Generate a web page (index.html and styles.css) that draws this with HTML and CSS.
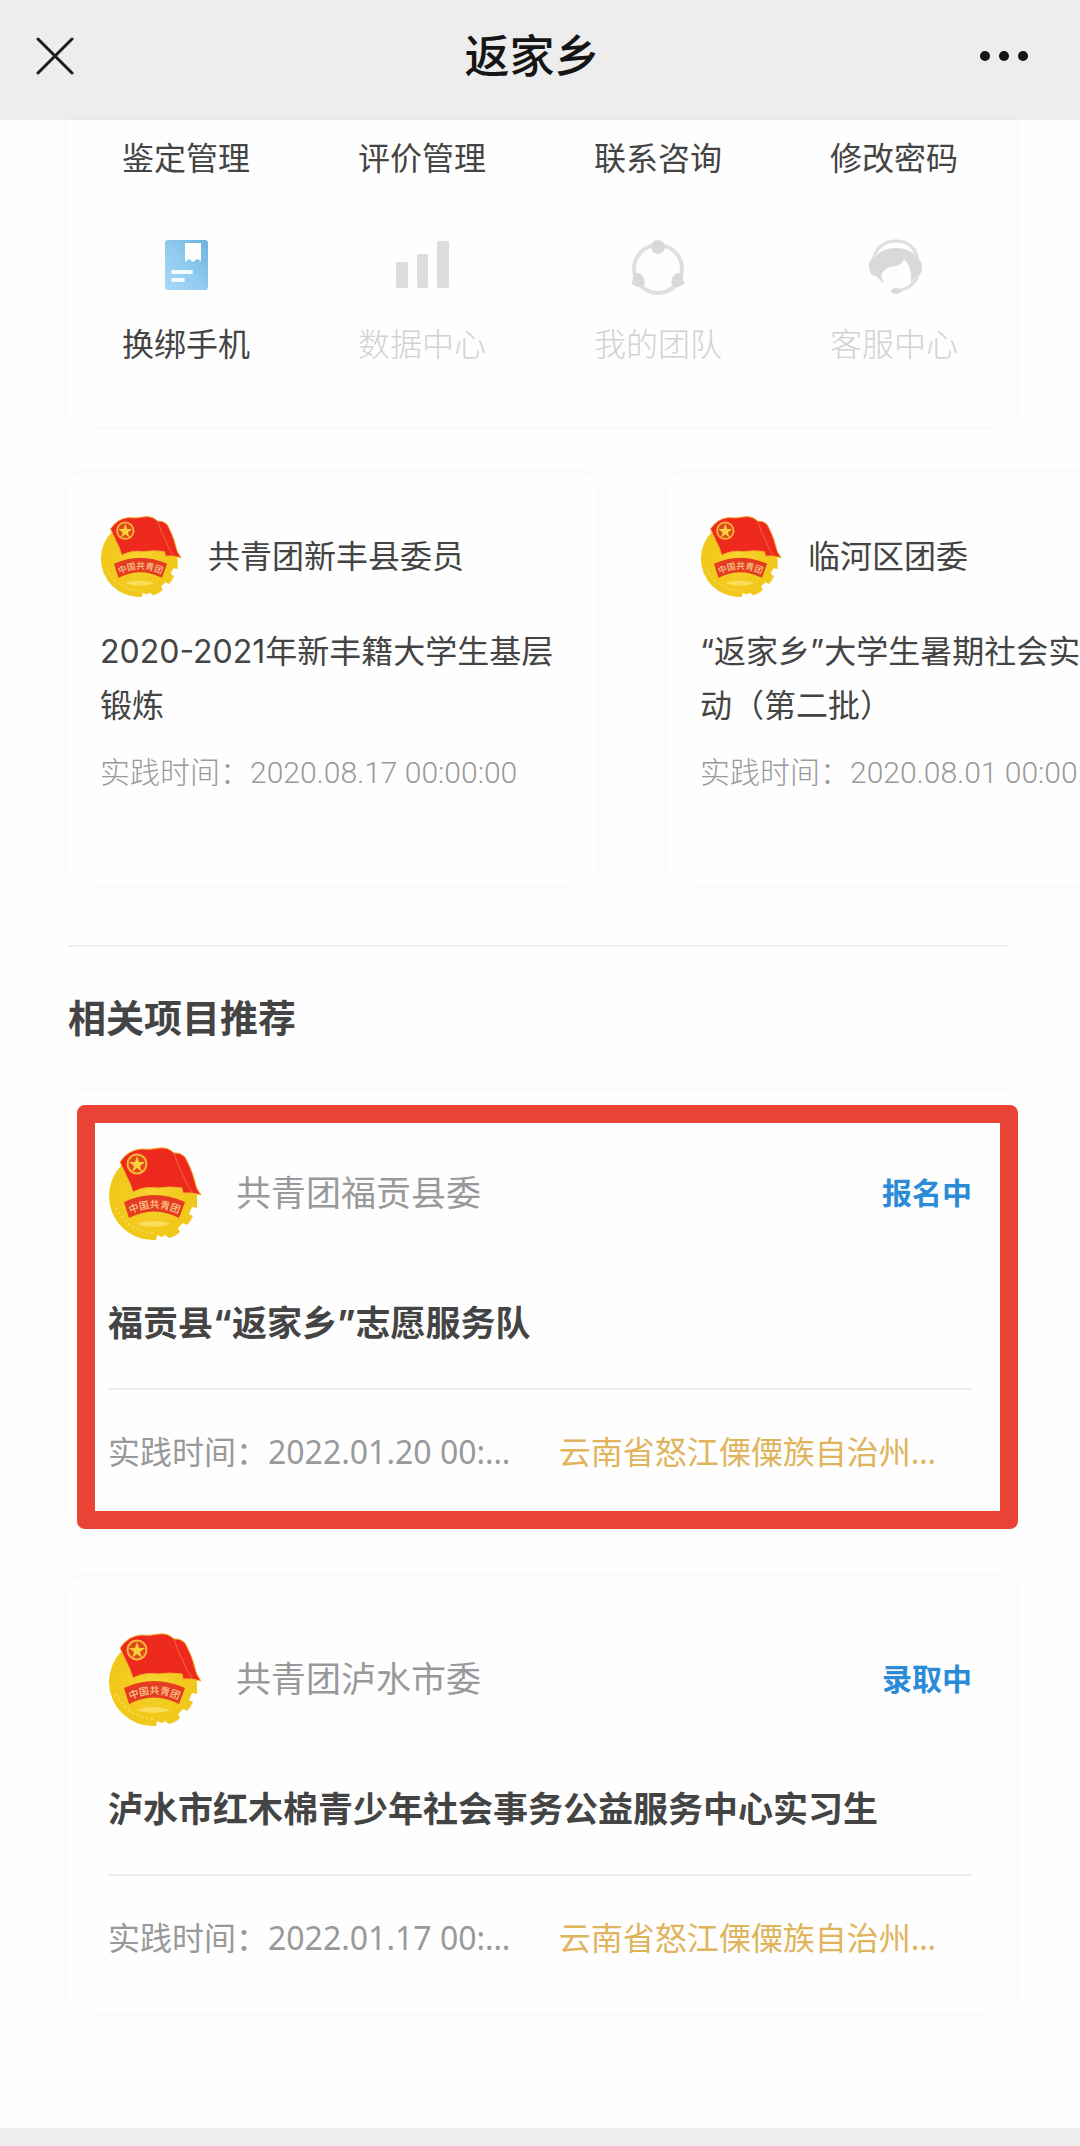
FILE: index.html
```html
<!DOCTYPE html>
<html lang="zh-CN">
<head>
<meta charset="utf-8">
<meta name="viewport" content="width=device-width, initial-scale=1">
<title>返家乡</title>
<link rel="stylesheet" href="styles.css">
</head>
<body>
<svg class="defs" aria-hidden="true">
  <defs>
    <linearGradient id="book" x1="1" y1="0" x2="0" y2="1">
      <stop offset="0" stop-color="#6db3dc"/>
      <stop offset="0.5" stop-color="#8fcaf0"/>
      <stop offset="1" stop-color="#a9d8f6"/>
    </linearGradient>
    <radialGradient id="gold">
      <stop offset="0" stop-color="#f6d531"/>
      <stop offset="0.7" stop-color="#f3c91c"/>
      <stop offset="1" stop-color="#efc81a"/>
    </radialGradient>
    <path id="banner-line" d="M20 69Q46 55 73 69"/>
    <symbol id="emblem" viewBox="0 0 94 94">
      <path d="M45 6A44 44 0 0 0 1 50A44 44 0 0 0 45 94L48 94L49 89L54 91L57 89L61 92Q68 90 72 86L70 82L75 77L79 79Q83 75 85 70L81 68L84 61L89 62L89 52Q89 6 45 6Z" fill="url(#gold)"/>
      <path d="M8 62Q20 86 47 87" fill="none" stroke="#f7dc55" stroke-width="2" stroke-dasharray="2 3"/>
      <path d="M28 78Q45 72 63 78Q45 84 28 78Z" fill="#f8de5a"/>
      <path d="M12 16Q20 4 33 3Q42 4 51 2Q60 1 66 7Q72 6 77 11Q84 24 86 33Q88 43 93 49Q84 46 75 47L74 42Q62 40 50 42Q36 40 25 46Q22 36 18 29Z" fill="#ee2a1f" stroke="#f5b02e" stroke-width="1"/>
      <path d="M66 7Q70 20 75 29Q78 38 84 46" fill="none" stroke="#f36a35" stroke-width="1"/>
      <circle cx="29" cy="18" r="9.500" fill="#e0491c" stroke="#f8b83a" stroke-width="2"/>
      <path d="M29 10L31 16L37 16L32 20L34 26L29 22L24 26L26 20L21 16L27 16Z" fill="#fbd03a"/>
      <path d="M16 56Q46 42 77 56L71 72Q46 59 21 72Z" fill="#e63c22"/>
      <text class="emblem-text"><textPath href="#banner-line" startOffset="50%" text-anchor="middle">中国共青团</textPath></text>
    </symbol>
  </defs>
</svg>

<header class="navbar">
  <button class="nav-button" type="button" aria-label="关闭">
    <svg width="38" height="38" viewBox="0 0 38 38"><path d="M2 2L36 36M36 2L2 36" fill="none" stroke="#1c1c1c" stroke-width="3" stroke-linecap="round"/></svg>
  </button>
  <h1 class="nav-title">返家乡</h1>
  <button class="nav-button nav-more" type="button" aria-label="更多">
    <svg width="48" height="12" viewBox="0 0 48 12" fill="#151515"><circle cx="5" cy="6" r="5"/><circle cx="24" cy="6" r="5"/><circle cx="43" cy="6" r="5"/></svg>
  </button>
</header>

<main class="page">
  <nav class="services">
    <a class="service" href="#">鉴定管理</a>
    <a class="service" href="#">评价管理</a>
    <a class="service" href="#">联系咨询</a>
    <a class="service" href="#">修改密码</a>
    <a class="service" href="#">
      <svg width="60" height="60" viewBox="0 0 60 60"><rect x="9" y="4" width="43" height="50" rx="3" fill="url(#book)"/><path d="M29 7H45V25L41 23L37 26L33 23L29 26Z" fill="#fff"/><path d="M17 36H35M17 44H27" stroke="#f4fbff" stroke-width="4" stroke-linecap="round"/></svg>
      换绑手机
    </a>
    <a class="service service-off" href="#">
      <svg width="60" height="60" viewBox="0 0 60 60" fill="#dcdcdc"><rect x="4" y="26" width="12" height="26" rx="2"/><rect x="25" y="18" width="11" height="34" rx="2"/><rect x="45" y="5" width="12" height="47" rx="2"/></svg>
      数据中心
    </a>
    <a class="service service-off" href="#">
      <svg width="60" height="60" viewBox="0 0 60 60"><circle cx="30" cy="33" r="24" fill="none" stroke="#dfdfdf" stroke-width="4"/><g fill="#d9d9d9"><circle cx="30" cy="11" r="7"/><path d="M3 47Q6 44 5 39Q10 35 14 39Q18 44 16 49Q11 54 3 47Z"/><path d="M57 47Q54 44 55 39Q50 35 46 39Q42 44 44 49Q49 54 57 47Z"/></g></svg>
      我的团队
    </a>
    <a class="service service-off" href="#">
      <svg width="60" height="60" viewBox="0 0 60 60"><path d="M9 24Q14 5 32 5Q50 5 54 24" fill="none" stroke="#dedede" stroke-width="3"/><path d="M5 27Q7 22 11 22Q17 12 32 12Q47 12 53 22Q58 24 58 32Q58 39 52 40L47 47Q48 33 43 27L40 23Q38 29 31 30Q20 31 17 40L20 48L12 40Q4 40 5 27Z" fill="#d9d9d9"/><path d="M54 39Q50 52 33 55" fill="none" stroke="#dedede" stroke-width="3"/><ellipse cx="32" cy="55" rx="5" ry="3" fill="#d9d9d9"/></svg>
      客服中心
    </a>
  </nav>

  <section class="carousel">
    <article class="mini-card">
      <div class="mini-head">
        <svg class="mini-emblem" role="img" aria-label="团徽"><use href="#emblem"/></svg>
        <span>共青团新丰县委员</span>
      </div>
      <h3 class="mini-title">2020-2021年新丰籍大学生基层锻炼</h3>
      <p class="mini-time">实践时间：2020.08.17 00:00:00</p>
    </article>
    <article class="mini-card">
      <div class="mini-head">
        <svg class="mini-emblem" role="img" aria-label="团徽"><use href="#emblem"/></svg>
        <span>临河区团委</span>
      </div>
      <h3 class="mini-title">“返家乡”大学生暑期社会实践活动（第二批）</h3>
      <p class="mini-time">实践时间：2020.08.01 00:00:00</p>
    </article>
  </section>

  <hr class="divider">

  <section class="related">
    <h2 class="related-title">相关项目推荐</h2>
    <article class="project project-marked">
      <div class="project-head">
        <svg class="project-emblem" role="img" aria-label="团徽"><use href="#emblem"/></svg>
        <span class="project-org">共青团福贡县委</span>
        <span class="project-status">报名中</span>
      </div>
      <h3 class="project-title">福贡县“返家乡”志愿服务队</h3>
      <div class="project-meta">
        <span class="project-time">实践时间：2022.01.20 00:00:00</span>
        <span class="project-place">云南省怒江傈僳族自治州福贡县</span>
      </div>
    </article>
    <article class="project">
      <div class="project-head">
        <svg class="project-emblem" role="img" aria-label="团徽"><use href="#emblem"/></svg>
        <span class="project-org">共青团泸水市委</span>
        <span class="project-status">录取中</span>
      </div>
      <h3 class="project-title">泸水市红木棉青少年社会事务公益服务中心实习生</h3>
      <div class="project-meta">
        <span class="project-time">实践时间：2022.01.17 00:00:00</span>
        <span class="project-place">云南省怒江傈僳族自治州泸水市</span>
      </div>
    </article>
  </section>
</main>
<footer class="bottom-bar"></footer>
</body>
</html>
```
FILE: styles.css
```css
* {
  box-sizing: border-box;
}

body {
  margin: 0;
  display: flex;
  flex-direction: column;
  min-height: 100vh;
  background: #fefefe;
  color: #444;
  font-family: "Noto Sans", "Noto Sans CJK SC", sans-serif;
  font-size: 32px;
  line-height: 40px;
}

h1, h2, h3, p {
  margin: 0;
}

.defs {
  position: absolute;
  width: 0;
  height: 0;
}

.emblem-text {
  font-size: 10px;
  font-weight: 500;
  fill: #f9c78a;
}

.navbar {
  display: grid;
  grid-template-columns: 1fr auto 1fr;
  align-items: center;
  padding: 26px 52px 34px 36px;
  background: #ededed;
}

.nav-button {
  display: flex;
  justify-self: start;
  padding: 0;
  border: 0;
  background: none;
}

.nav-more {
  justify-self: end;
}

.nav-title {
  color: #151515;
  font-size: 45px;
  font-weight: 500;
  line-height: 60px;
}

.page {
  flex: 1;
  padding: 0 64px 0 68px;
}

.services {
  display: grid;
  grid-template-columns: repeat(4, 1fr);
  row-gap: 58px;
  padding: 18px 4px 62px 0;
  border-radius: 0 0 16px 16px;
  box-shadow: 0 0 12px rgba(0, 0, 0, 0.04);
}

.service {
  display: flex;
  flex-direction: column;
  align-items: center;
  gap: 28px;
  color: #444;
  text-decoration: none;
}

.service-off {
  color: #d2d2d2;
  font-weight: 300;
}

.carousel {
  display: flex;
  gap: 72px;
  margin: 31px -64px 0 -16px;
  padding: 16px;
  overflow-x: auto;
  scrollbar-width: none;
}

.mini-card {
  flex: 0 0 528px;
  padding: 42px 32px 90px;
  border-radius: 16px;
  box-shadow: 0 0 12px rgba(0, 0, 0, 0.04);
}

.mini-head {
  display: flex;
  align-items: center;
  gap: 26px;
}

.mini-emblem {
  width: 82px;
  height: 82px;
}

.mini-title,
.project-title {
  font-family: Inter, "Noto Sans CJK SC", sans-serif;
}

.mini-title {
  margin-top: 28px;
  font-size: 32px;
  font-weight: 400;
  line-height: 54px;
}

.mini-time {
  margin-top: 20px;
  color: #999;
  font-family: Roboto, "Noto Sans CJK SC", sans-serif;
  font-size: 30px;
  font-weight: 300;
}

.divider {
  margin: 46px 8px 0 0;
  border: 0;
  border-top: 2px solid #eee;
}

.related-title {
  padding: 44px 0 48px;
  font-size: 38px;
  font-weight: 700;
  line-height: 52px;
}

.project {
  position: relative;
  margin-bottom: 52px;
  padding: 55px 44px 53px 40px;
  border-radius: 16px;
  box-shadow: 0 0 12px rgba(0, 0, 0, 0.04);
}

/* highlight frame laid over the card */
.project-marked::after {
  content: "";
  position: absolute;
  inset: 14px -2px -4px 9px;
  border: 18px solid #ea4335;
  border-radius: 8px;
}

.project-head {
  display: flex;
  align-items: center;
}

.project-emblem {
  width: 94px;
  height: 94px;
}

.project-org {
  margin-left: 34px;
  color: #999;
  font-size: 35px;
}

.project-status {
  margin-left: auto;
  color: #2b8bd6;
  font-size: 30px;
  font-weight: 700;
}

.project-title {
  margin-top: 58px;
  font-size: 35px;
  font-weight: 700;
  line-height: 50px;
}

.project-meta {
  display: flex;
  gap: 36px;
  margin-top: 40px;
  padding-top: 42px;
  border-top: 2px solid #eee;
}

.project-time,
.project-place {
  overflow: hidden;
  text-overflow: ellipsis;
  white-space: nowrap;
}

.project-time {
  flex: 0 0 48%;
  color: #999;
}

.project-place {
  flex: 0 1 45%;
  color: #dfb45c;
}

.bottom-bar {
  height: 18px;
  background: #ededed;
}
```
